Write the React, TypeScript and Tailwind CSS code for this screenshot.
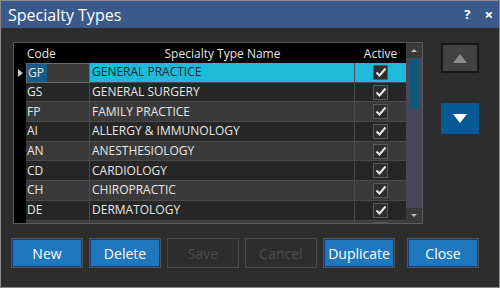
const rows: [string, string][] = [
  ['GP', 'GENERAL PRACTICE'],
  ['GS', 'GENERAL SURGERY'],
  ['FP', 'FAMILY PRACTICE'],
  ['AI', 'ALLERGY & IMMUNOLOGY'],
  ['AN', 'ANESTHESIOLOGY'],
  ['CD', 'CARDIOLOGY'],
  ['CH', 'CHIROPRACTIC'],
  ['DE', 'DERMATOLOGY'],
  ['', ''],
];

function Check() {
  return (
    <div className="flex h-[15px] w-[15px] shrink-0 items-center justify-center border border-[#5a5a5a] bg-[#2e2e2e]">
      <svg width="12" height="11" viewBox="0 0 12 11">
        <path d="M1.5 5.5 L4.5 8.5 L10.5 1.5" fill="none" stroke="#e8e8e8" strokeWidth="2" />
      </svg>
    </div>
  );
}

function Btn({ label, disabled, className = '' }: { label: string; disabled?: boolean; className?: string }) {
  if (disabled) {
    return (
      <div className={`flex h-[30px] w-[72px] items-center justify-center border border-[#4a4a4a] text-[14px] text-[#4c4c4c] ${className}`}>
        {label}
      </div>
    );
  }
  return (
    <div className={`h-[30px] w-[72px] border border-[#555] ${className}`}>
      <div className="flex h-full w-full items-center justify-center border border-[#1b3a78] bg-[#1f77bd] text-[14px] text-white">
        {label}
      </div>
    </div>
  );
}

export default function App() {
  return (
    <div
      className="flex h-[288px] w-[500px] flex-col border border-[#8a8a8a] bg-[#2d2d2d]"
      style={{ fontFamily: '"Open Sans", "Noto Sans", sans-serif' }}
    >
      {/* Title bar */}
      <div className="flex h-[27px] shrink-0 items-center bg-[#3b5a8b] pl-[7px] pr-[6px] text-white">
        <span className="text-[16px] leading-none">Specialty Types</span>
        <span className="ml-auto text-[13px] font-bold">?</span>
        <span className="ml-[14px] text-[15px] font-bold leading-none">×</span>
      </div>

      <div className="flex pl-[12px] pt-[14px]">
        {/* Grid */}
        <div className="flex h-[182px] w-[410px] border border-[#5a5a5a] bg-black">
          <div className="flex w-[392px] flex-col overflow-hidden">
            <div className="flex h-[20px] shrink-0 items-center pt-[1px] text-[12px] text-[#e6e6e6]">
              <div className="w-[12px]" />
              <div className="w-[64px] pl-[1px]">Code</div>
              <div className="w-[265px] text-center">Specialty Type Name</div>
              <div className="w-[51px] text-center">Active</div>
            </div>
            {rows.map(([code, name], i) => {
              const sel = i === 0;
              const bg = i % 2 === 0 ? 'bg-[#3a3a3a]' : 'bg-[#262626]';
              return (
                <div key={i} className="flex h-[19.7px] shrink-0 text-[12px] text-[#e6e6e6]">
                  <div className="flex w-[12px] items-center justify-center bg-black">
                    {sel && (
                      <svg width="5" height="8" viewBox="0 0 5 8">
                        <path d="M0 0 L5 4 L0 8 Z" fill="#c8c8c8" />
                      </svg>
                    )}
                  </div>
                  <div className={`flex w-[64px] items-center border-b border-r border-[#4a4a4a] ${bg} ${sel ? 'border border-[#6a6a6a]' : ''}`}>
                    <span className={`pl-[1px] ${sel ? 'bg-[#1a5a88] pr-[3px]' : ''}`}>{code}</span>
                  </div>
                  <div
                    className={`flex w-[265px] items-center border-b border-r border-[#4a4a4a] pl-[2px] ${
                      sel ? 'bg-[#1fb9d9] text-[#1a2a33]' : bg
                    }`}
                  >
                    {name}
                  </div>
                  <div className={`flex w-[51px] items-center justify-center border-b border-[#4a4a4a] ${sel ? 'bg-[#1fb9d9]' : bg}`}>
                    <Check />
                  </div>
                </div>
              );
            })}
          </div>
          {/* Scrollbar */}
          <div className="flex w-[16px] flex-col bg-[#4a4657]">
            <div className="flex h-[15px] items-center justify-center bg-[#3a3a3a]">
              <svg width="6" height="3" viewBox="0 0 6 3">
                <path d="M0 3 L3 0 L6 3 Z" fill="#bdbdbd" />
              </svg>
            </div>
            <div className="mx-auto mt-[1px] h-[50px] w-[10px] bg-[#0b5878]" />
            <div className="mt-auto flex h-[15px] items-center justify-center bg-[#3a3a3a]">
              <svg width="6" height="3" viewBox="0 0 6 3">
                <path d="M0 0 L6 0 L3 3 Z" fill="#bdbdbd" />
              </svg>
            </div>
          </div>
        </div>

        {/* Move buttons */}
        <div className="ml-[18px] flex flex-col pt-[1px]">
          <div className="flex h-[30px] w-[38px] items-center justify-center border-2 border-[#161616] bg-[#424242]">
            <svg width="14" height="9" viewBox="0 0 14 9">
              <path d="M0 9 L7 0 L14 9 Z" fill="#8c8c8c" />
            </svg>
          </div>
          <div className="mt-[30px] flex h-[31px] w-[38px] items-center justify-center bg-[#075a96]">
            <svg width="14" height="9" viewBox="0 0 14 9">
              <path d="M0 0 L14 0 L7 9 Z" fill="#ffffff" />
            </svg>
          </div>
        </div>
      </div>

      {/* Bottom buttons */}
      <div className="mt-[14px] flex gap-[6px] pl-[10px]">
        <Btn label="New" />
        <Btn label="Delete" />
        <Btn label="Save" disabled />
        <Btn label="Cancel" disabled />
        <Btn label="Duplicate" />
        <Btn label="Close" className="ml-[6px]" />
      </div>
    </div>
  );
}
